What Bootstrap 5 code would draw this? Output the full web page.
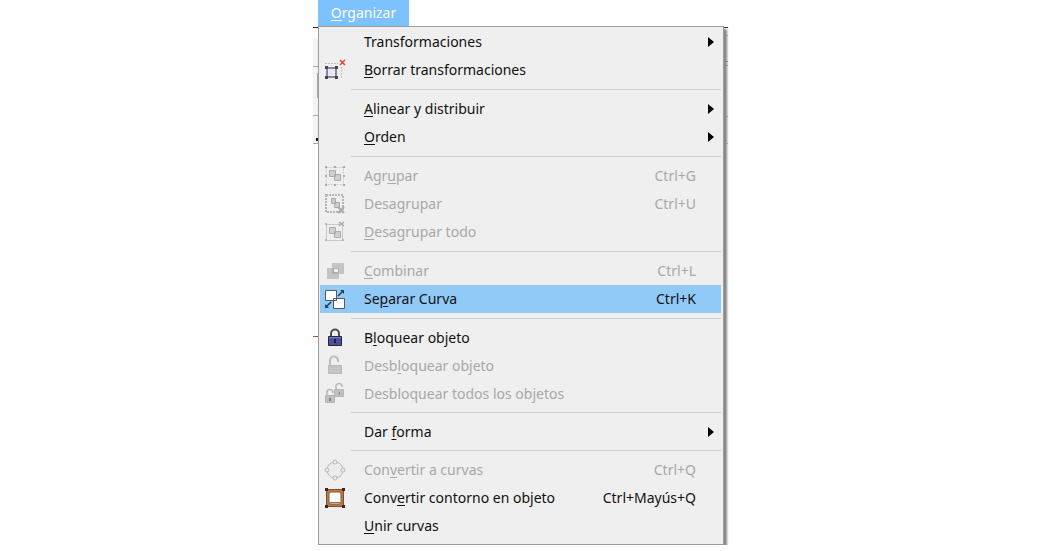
<!DOCTYPE html>
<html lang="es">
<head>
<meta charset="utf-8">
<meta name="viewport" content="width=device-width, initial-scale=1">
<title>Organizar</title>
<link href="https://cdn.jsdelivr.net/npm/bootstrap@5.3.0/dist/css/bootstrap.min.css" rel="stylesheet">
<style>
body{background:#fefefe;font-family:"Noto Sans","Open Sans",sans-serif;font-size:14px;line-height:20px;color:#111}
.app-slice{width:417px;max-width:100%;padding:0 6px 0 5px}
.app-behind{left:0;top:0;width:417px;height:551px}
.menu-title{height:26px;width:91px;background:#7cc2ff;color:#fff;font-size:14px;line-height:20px}
.menu-panel{background:#efefef;border:1px solid #9c9c9c;padding:1px 2px 4px 1px;box-shadow:3px 3px 2px #888}
.menu-row{height:28px;padding:0 25px 0 0;color:#111;font-size:14px;line-height:20px;background:transparent}
.menu-row:hover,.menu-row:focus{background:#91c9f7;color:#111}
.menu-row:disabled{color:#a8a8a8}
.menu-row.chosen{background:#91c9f7;color:#111}
.menu-icon{width:32px;height:26px;flex:none;padding-left:4px;margin-right:12px;display:flex;align-items:center}
.menu-arrow{margin-right:-18px}
.menu-rule{height:11px;padding:5px 0;margin:0 0 0 31px;list-style:none}
.menu-rule.tight{height:10px;padding:4px 0 5px}
.menu-rule hr{margin:0;border:0;height:1px;background:#d0d0d0;opacity:1}
u{text-underline-offset:2px}
</style>
</head>
<body>
<main class="app-slice position-relative mx-auto">
<svg class="app-behind position-absolute" viewBox="0 0 417 551" aria-hidden="true">
<path fill="#f3f3f3" d="M0 38h6v105H0zM410 36h5v107h-5z"/>
<path stroke="#333" d="M0 27.5h6M410 27.5h5"/>
<path stroke="#aaa" d="M0 66.5h6M0 115.5h6M0 143.5h6M4.500 73v25M410 35.500h5M410 65.500h5M410 116.500h5M410 143.500h5"/>
<path stroke="#777" d="M410 61.500h5"/>
<path fill="#111" d="M3 138h2v3H3zM411 138h2v3h-2z"/>
<path stroke="#a65a2a" d="M0 336.500h6"/>
</svg>
<div class="position-relative">
<button type="button" class="menu-title btn rounded-0 border-0 p-0 d-block" aria-expanded="true"><u>O</u>rganizar</button>
<ul class="menu-panel list-unstyled mb-0">
<li><button type="button" class="menu-row dropdown-item d-flex align-items-center"><span class="menu-icon"></span>Transformaciones<svg class="menu-arrow ms-auto" width="6" height="10"><path d="M0 0 6 5 0 10z"/></svg></button></li>
<li><button type="button" class="menu-row dropdown-item d-flex align-items-center"><span class="menu-icon"><svg width="22" height="22" fill="none"><path stroke="#b8c4bd" stroke-dasharray="2 1" d="M1 4.500h13M17.500 8v12"/><path stroke="#68657b" stroke-width="1.500" fill="#e8e8fa" d="M3 9h9v9H3z"/><path fill="#454252" d="M1 7h3v3H1zM11 7h3v3h-3zM1 17h3v3H1zM11 17h3v3h-3z"/><path stroke="#e04531" stroke-width="1.500" d="m16 1 5 5m0-5-5 5"/></svg></span><span><u>B</u>orrar transformaciones</span></button></li>
<li class="menu-rule"><hr></li>
<li><button type="button" class="menu-row dropdown-item d-flex align-items-center"><span class="menu-icon"></span><span><u>A</u>linear y distribuir</span><svg class="menu-arrow ms-auto" width="6" height="10"><path d="M0 0 6 5 0 10z"/></svg></button></li>
<li><button type="button" class="menu-row dropdown-item d-flex align-items-center"><span class="menu-icon"></span><span><u>O</u>rden</span><svg class="menu-arrow ms-auto" width="6" height="10"><path d="M0 0 6 5 0 10z"/></svg></button></li>
<li class="menu-rule"><hr></li>
<li><button type="button" disabled class="menu-row dropdown-item d-flex align-items-center"><span class="menu-icon"><svg width="22" height="22" fill="none" stroke="#b5b5b5"><path stroke-dasharray="2 1" stroke="#ccc" d="M2.500 2.500h17v17h-17z"/><path stroke="#aaa" fill="#d0d0d0" d="M5.500 5.500h6v6h-6zM10.500 9.500h6v6h-6z"/><path fill="#aaa" stroke="none" d="M1 1h2v2H1zM10 1h2v2h-2zM19 1h2v2h-2zM1 10h2v2H1zM19 10h2v2h-2zM1 19h2v2H1zM10 19h2v2h-2zM19 19h2v2h-2z"/></svg></span><span>Agr<u>u</u>par</span><span class="ms-auto">Ctrl+G</span></button></li>
<li><button type="button" disabled class="menu-row dropdown-item d-flex align-items-center"><span class="menu-icon"><svg width="22" height="22" fill="none" stroke="#b5b5b5"><path stroke-width="2" stroke-dasharray="2 1" d="M2 2h17v17H2z"/><path stroke="#aaa" fill="#ccc" d="M7.500 5.500h4v5h-4zM10.500 9.500h5v5h-5z"/><path stroke="#aaa" stroke-width="2" d="m14 14 6 6m0-6-6 6"/></svg></span><span>Desa<u>g</u>rupar</span><span class="ms-auto">Ctrl+U</span></button></li>
<li><button type="button" disabled class="menu-row dropdown-item d-flex align-items-center"><span class="menu-icon"><svg width="22" height="22" fill="none" stroke="#c8c8c8"><path d="M2.500 3.500h16v16h-16z"/><path stroke="#aaa" fill="#d0d0d0" d="M5.500 6.500h6v6h-6zM10.500 10.500h6v6h-6z"/><path fill="#b5b5b5" stroke="none" d="M1 2h2v2H1zM1 18h2v2H1zM18 18h2v2h-2z"/><path stroke="#aaa" stroke-width="1.500" d="m15 1 5 4m0-4-5 4"/></svg></span><span><u>D</u>esagrupar todo</span></button></li>
<li class="menu-rule"><hr></li>
<li><button type="button" disabled class="menu-row dropdown-item d-flex align-items-center"><span class="menu-icon"><svg width="22" height="22"><path fill="#c4c4c4" d="M8 3h12v11h-5v5H3V8h5z"/><path fill="#b0b0b0" fill-rule="evenodd" d="M8 8h7v6H8zM10 9v3h4V9z"/><path fill="#eee" d="M10 9h4v3h-4z"/></svg></span><span><u>C</u>ombinar</span><span class="ms-auto">Ctrl+L</span></button></li>
<li><button type="button" class="menu-row chosen dropdown-item d-flex align-items-center" aria-current="true"><span class="menu-icon"><svg width="22" height="22"><path fill="#fff" stroke="#5a5569" d="M1.500 2.500h11v10h-11zM9.500 10.500h11v10h-11z"/><path fill="none" stroke="#24405c" stroke-width="1.500" d="m14 8 5-5M7 14l-5 5"/><path fill="#24405c" d="M16 2h4v4zM1 16v4h4z"/></svg></span><span>Se<u>p</u>arar Curva</span><span class="ms-auto">Ctrl+K</span></button></li>
<li class="menu-rule"><hr></li>
<li><button type="button" class="menu-row dropdown-item d-flex align-items-center"><span class="menu-icon"><svg width="22" height="22"><path fill="none" stroke="#4c4b5d" stroke-width="2" d="M7 10V6.500a4 4 0 0 1 8 0V10"/><path fill="#4e5199" stroke="#26253c" d="M4.500 9.500h13v9h-13z"/><path stroke="#7c80bf" d="M5 10.500h12"/><path fill="#1c1b35" d="M10 12h2v4h-2z"/></svg></span><span>B<u>l</u>oquear objeto</span></button></li>
<li><button type="button" disabled class="menu-row dropdown-item d-flex align-items-center"><span class="menu-icon"><svg width="22" height="22"><path fill="none" stroke="#bdbdbd" stroke-width="2" d="M6 10V6a4 4 0 0 1 8-1v2"/><path fill="#c3c3c3" stroke="#bbb" d="M4.500 10.500h13v8h-13z"/><path stroke="#ccc" d="M6 13.500h10M6 16.500h10"/></svg></span><span>Desb<u>l</u>oquear objeto</span></button></li>
<li><button type="button" disabled class="menu-row dropdown-item d-flex align-items-center"><span class="menu-icon"><svg width="22" height="22"><path fill="none" stroke="#b8b8b8" stroke-width="1.500" d="M12 7V4a3 3 0 0 1 6-1v1M3 13v-3a3 3 0 0 1 6-1v1"/><path fill="#c0c0c0" stroke="#b5b5b5" d="M10.500 6.500h9v7h-9zM1.500 12.500h9v7h-9z"/><path fill="#888" d="M15 9h1v3h-1zM5 15h2v3H5z"/></svg></span><span>Desbloquear todos los ob<u>j</u>etos</span></button></li>
<li class="menu-rule tight"><hr></li>
<li><button type="button" class="menu-row dropdown-item d-flex align-items-center"><span class="menu-icon"></span><span>Dar <u>f</u>orma</span><svg class="menu-arrow ms-auto" width="6" height="10"><path d="M0 0 6 5 0 10z"/></svg></button></li>
<li class="menu-rule tight"><hr></li>
<li><button type="button" disabled class="menu-row dropdown-item d-flex align-items-center"><span class="menu-icon"><svg width="22" height="22" fill="#ececec" stroke="#b8b8b8"><circle cx="11" cy="11" r="8"/><circle cx="11" cy="3" r="2"/><circle cx="11" cy="19" r="2"/><circle cx="3" cy="11" r="2"/><circle cx="19" cy="11" r="2"/></svg></span><span>Con<u>v</u>ertir a curvas</span><span class="ms-auto">Ctrl+Q</span></button></li>
<li><button type="button" class="menu-row dropdown-item d-flex align-items-center"><span class="menu-icon"><svg width="22" height="22"><path fill="#bd7840" stroke="#80502f" d="M2.500 2.500h17v17h-17z"/><rect x="5" y="5" width="12" height="12" rx="2" fill="#fff" stroke="#8a5b3b"/><path fill="none" stroke="#777681" d="M6 15.500h10"/><path fill="#33292b" d="M1 1h3v3H1zM18 1h3v3h-3zM1 18h3v3H1zM18 18h3v3h-3z"/></svg></span><span>Conv<u>e</u>rtir contorno en objeto</span><span class="ms-auto">Ctrl+Mayús+Q</span></button></li>
<li><button type="button" class="menu-row dropdown-item d-flex align-items-center"><span class="menu-icon"></span><span><u>U</u>nir curvas</span></button></li>
</ul>
</div>
</main>
<script src="https://cdn.jsdelivr.net/npm/bootstrap@5.3.0/dist/js/bootstrap.bundle.min.js"></script>
</body>
</html>
